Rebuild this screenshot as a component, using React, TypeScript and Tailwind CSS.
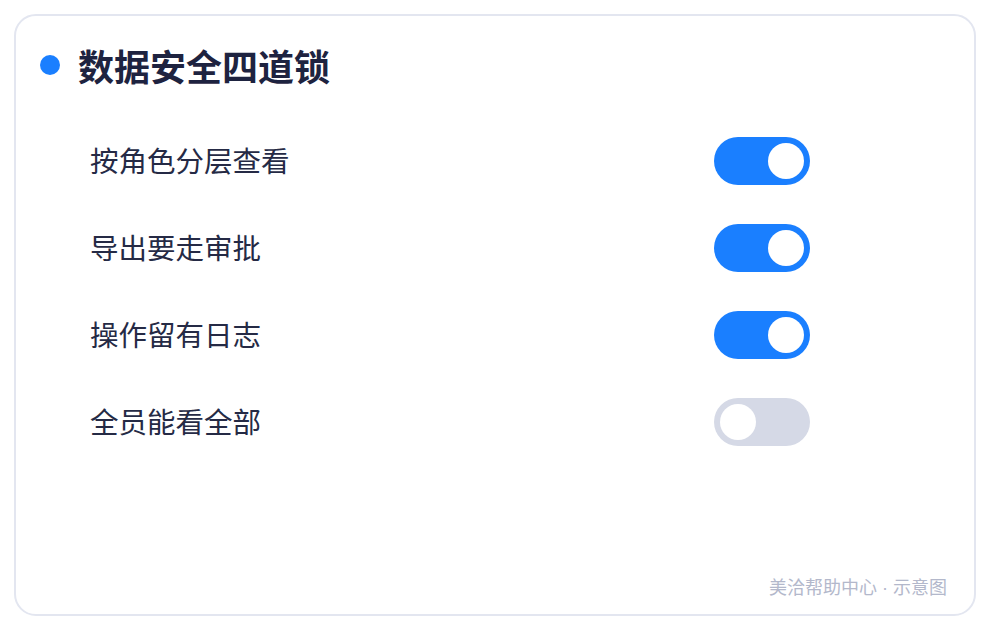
import { useState } from "react"

const font = { fontFamily: '"Noto Sans CJK SC", "Noto Sans", sans-serif' }

type Lock = { label: string; on: boolean }

function Toggle({ on, onChange }: { on: boolean; onChange: () => void }) {
  return (
    <button
      onClick={onChange}
      className={`flex h-[48px] w-[96px] items-center rounded-full p-[6px] transition-colors ${
        on ? "justify-end bg-[#1a7fff]" : "justify-start bg-[#d5d9e6]"
      }`}
    >
      <span className="block h-[36px] w-[36px] rounded-full bg-white" />
    </button>
  )
}

export default function App() {
  const [locks, setLocks] = useState<Lock[]>([
    { label: "按角色分层查看", on: true },
    { label: "导出要走审批", on: true },
    { label: "操作留有日志", on: true },
    { label: "全员能看全部", on: false },
  ])

  const flip = (i: number) =>
    setLocks((prev) => prev.map((l, j) => (j === i ? { ...l, on: !l.on } : l)))

  return (
    <div className="h-[630px] w-[990px] bg-white p-[14px]" style={font}>
      <div className="flex h-[602px] flex-col rounded-[22px] border-2 border-[#e3e6f0] bg-white">
        <div className="flex items-center gap-[18px] pl-[24px] pt-[31px]">
          <span className="h-[20px] w-[20px] rounded-full bg-[#1a7fff]" />
          <h2 className="text-[36px] font-bold leading-[36px] text-[#1e2340]">数据安全四道锁</h2>
        </div>

        <div className="ml-[74px] mt-[34px] w-[720px]">
          {locks.map((l, i) => (
            <div key={l.label} className="flex h-[87px] items-center justify-between">
              <span className="text-[28.5px] leading-none text-[#252a45]">{l.label}</span>
              <Toggle on={l.on} onChange={() => flip(i)} />
            </div>
          ))}
        </div>

        <div className="mt-auto pb-[14px] pr-[27px] text-right text-[18px] leading-[24px] text-[#b3b8cb]">
          美洽帮助中心
          <span style={{ fontFamily: '"Liberation Sans", sans-serif' }}> · </span>
          示意图
        </div>
      </div>
    </div>
  )
}
